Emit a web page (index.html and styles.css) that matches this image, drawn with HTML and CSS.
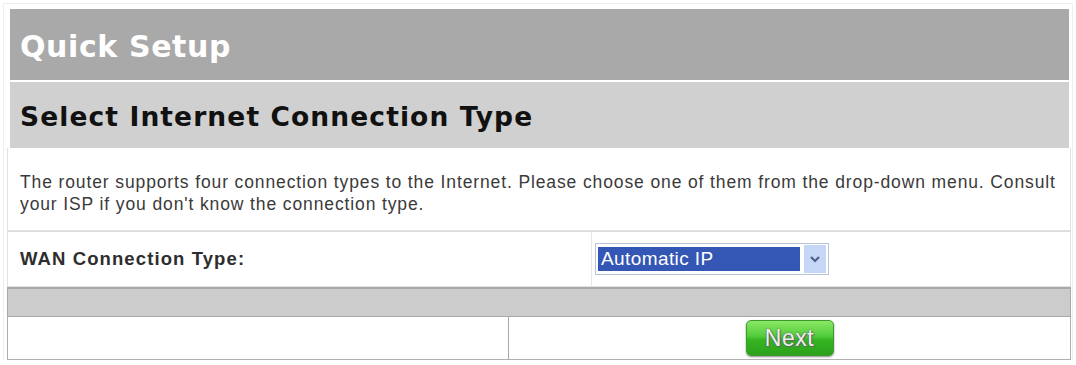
FILE: index.html
```html
<!DOCTYPE html>
<html>
<head>
<meta charset="utf-8">
<title>Quick Setup</title>
<link rel="stylesheet" href="styles.css">
</head>
<body>
<div class="wrap">
  <div class="band-title">Quick Setup</div>
  <div class="band-sub">Select Internet Connection Type</div>
  <div class="desc">The router supports four connection types to the Internet. Please choose one of them from the drop-down menu. Consult your ISP if you don't know the connection type.</div>
  <div class="row-wan">
    <div class="wan-label">WAN Connection Type:</div>
    <div class="wan-value">
      <div class="select">
        <span class="select-text">Automatic IP</span>
        <span class="select-btn">
          <svg width="12" height="8" viewBox="0 0 12 8"><path d="M2 2 L6 6 L10 2" fill="none" stroke="#4d6185" stroke-width="2.2"/></svg>
        </span>
      </div>
    </div>
  </div>
  <div class="row-band"></div>
  <div class="row-foot">
    <div class="foot-left"></div>
    <div class="foot-right"><button class="btn-next">Next</button></div>
  </div>
</div>
</body>
</html>
```

FILE: styles.css
```css
html, body {
  margin: 0;
  padding: 0;
  background: #ffffff;
}
body {
  font-family: "Liberation Sans", Arial, sans-serif;
  color: #333333;
}
.wrap {
  margin: 3px 3px 0 3px;
  border: 1px solid #eeeeee;
  border-bottom: none;
  padding: 5px 1px 0 3px;
  height: 357px;
  box-sizing: border-box;
}
.band-title {
  margin: 0 2px 0 3px;
  height: 71px;
  background: #a9a9a9;
  color: #ffffff;
  font-family: "DejaVu Sans", Verdana, sans-serif;
  font-weight: bold;
  font-size: 30px;
  letter-spacing: 0.6px;
  display: flex;
  align-items: center;
  padding: 4px 0 0 10px;
  box-sizing: border-box;
}
.band-sub {
  margin: 2px 2px 0 3px;
  height: 66px;
  background: #d0d0d0;
  color: #111111;
  font-family: "DejaVu Sans", Verdana, sans-serif;
  font-weight: bold;
  font-size: 26.5px;
  letter-spacing: 1.1px;
  display: flex;
  align-items: center;
  padding: 2px 0 0 10px;
  box-sizing: border-box;
}
.desc {
  border: 1px solid #e2e2e2;
  border-top: none;
  padding: 23px 12px 15px 12px;
  font-size: 17.5px;
  letter-spacing: 0.88px;
  line-height: 22px;
  color: #3a3a3a;
}
.row-wan {
  display: flex;
  height: 56px;
  border: 1px solid #e2e2e2;
  border-top: 1px solid #dcdcdc;
  box-sizing: border-box;
}
.wan-label {
  width: 584px;
  border-right: 1px solid #e6e6e6;
  display: flex;
  align-items: center;
  padding-left: 12px;
  box-sizing: border-box;
  font-weight: bold;
  font-size: 18.5px;
  letter-spacing: 1.1px;
  color: #2e2e2e;
}
.wan-value {
  flex: 1;
  display: flex;
  align-items: center;
  padding-left: 3px;
}
.select {
  width: 234px;
  height: 32px;
  border: 1px solid #b8c4d6;
  background: #ffffff;
  box-sizing: border-box;
  display: flex;
  align-items: center;
  padding: 2px;
  gap: 4px;
}
.select-text {
  flex: 1;
  height: 24px;
  background: #3456b4;
  color: #ffffff;
  font-size: 19px;
  letter-spacing: 0.4px;
  line-height: 24px;
  padding-left: 3px;
}
.select-btn {
  width: 22px;
  height: 28px;
  background: #c6d6f6;
  display: flex;
  align-items: center;
  justify-content: center;
}
.row-band {
  height: 30px;
  background: #cccccc;
  border: 1px solid #a8a8a8;
  border-top: 2px solid #a8a8a8;
  box-sizing: border-box;
}
.row-foot {
  display: flex;
  height: 43px;
  border: 1px solid #b0b0b0;
  border-top: none;
  box-sizing: border-box;
}
.foot-left {
  width: 500px;
  border-right: 1px solid #a8a8a8;
}
.foot-right {
  flex: 1;
  display: flex;
  align-items: center;
  justify-content: center;
}
.btn-next {
  width: 88px;
  height: 36px;
  border: 1px solid #3c9a2a;
  border-radius: 5px;
  background: linear-gradient(#8ae866 0%, #52cc3a 45%, #36b622 55%, #2ca01c 100%);
  color: #eeeeee;
  font-family: "Liberation Sans", Arial, sans-serif;
  font-size: 23px;
  letter-spacing: 0.5px;
  text-shadow: 0 0 2px #555555, 1px 1px 1px #666666;
  padding: 0;
  box-shadow: 0 1px 2px #888888;
}
```
